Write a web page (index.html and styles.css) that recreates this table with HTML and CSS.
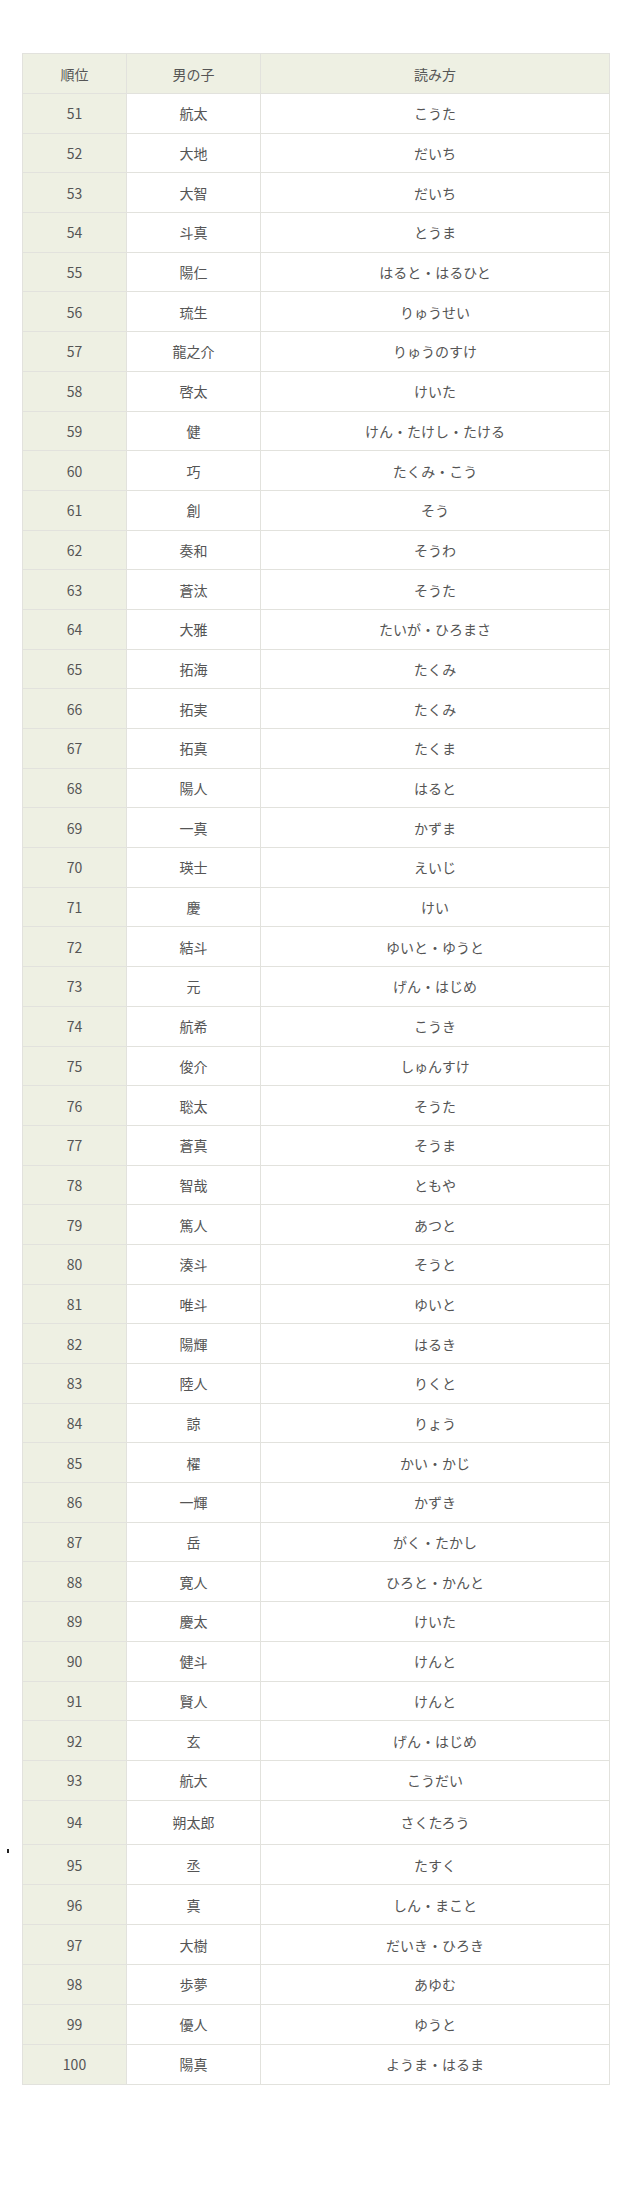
FILE: index.html
```html
<!DOCTYPE html>
<html lang="ja">
<head>
<meta charset="utf-8">
<title>男の子の名前ランキング</title>
<link rel="stylesheet" href="styles.css">
</head>
<body>
<div class="page">
<span class="tick"></span>
<table class="rank">
<thead>
<tr><th class="c-rank">順位</th><th class="c-name">男の子</th><th class="c-read">読み方</th></tr>
</thead>
<tbody>
<tr><td class="c-rank">51</td><td>航太</td><td>こうた</td></tr>
<tr><td class="c-rank">52</td><td>大地</td><td>だいち</td></tr>
<tr><td class="c-rank">53</td><td>大智</td><td>だいち</td></tr>
<tr><td class="c-rank">54</td><td>斗真</td><td>とうま</td></tr>
<tr><td class="c-rank">55</td><td>陽仁</td><td>はると・はるひと</td></tr>
<tr><td class="c-rank">56</td><td>琉生</td><td>りゅうせい</td></tr>
<tr><td class="c-rank">57</td><td>龍之介</td><td>りゅうのすけ</td></tr>
<tr><td class="c-rank">58</td><td>啓太</td><td>けいた</td></tr>
<tr><td class="c-rank">59</td><td>健</td><td>けん・たけし・たける</td></tr>
<tr><td class="c-rank">60</td><td>巧</td><td>たくみ・こう</td></tr>
<tr><td class="c-rank">61</td><td>創</td><td>そう</td></tr>
<tr><td class="c-rank">62</td><td>奏和</td><td>そうわ</td></tr>
<tr><td class="c-rank">63</td><td>蒼汰</td><td>そうた</td></tr>
<tr><td class="c-rank">64</td><td>大雅</td><td>たいが・ひろまさ</td></tr>
<tr><td class="c-rank">65</td><td>拓海</td><td>たくみ</td></tr>
<tr><td class="c-rank">66</td><td>拓実</td><td>たくみ</td></tr>
<tr><td class="c-rank">67</td><td>拓真</td><td>たくま</td></tr>
<tr><td class="c-rank">68</td><td>陽人</td><td>はると</td></tr>
<tr><td class="c-rank">69</td><td>一真</td><td>かずま</td></tr>
<tr><td class="c-rank">70</td><td>瑛士</td><td>えいじ</td></tr>
<tr><td class="c-rank">71</td><td>慶</td><td>けい</td></tr>
<tr><td class="c-rank">72</td><td>結斗</td><td>ゆいと・ゆうと</td></tr>
<tr><td class="c-rank">73</td><td>元</td><td>げん・はじめ</td></tr>
<tr><td class="c-rank">74</td><td>航希</td><td>こうき</td></tr>
<tr><td class="c-rank">75</td><td>俊介</td><td>しゅんすけ</td></tr>
<tr><td class="c-rank">76</td><td>聡太</td><td>そうた</td></tr>
<tr><td class="c-rank">77</td><td>蒼真</td><td>そうま</td></tr>
<tr><td class="c-rank">78</td><td>智哉</td><td>ともや</td></tr>
<tr><td class="c-rank">79</td><td>篤人</td><td>あつと</td></tr>
<tr><td class="c-rank">80</td><td>湊斗</td><td>そうと</td></tr>
<tr><td class="c-rank">81</td><td>唯斗</td><td>ゆいと</td></tr>
<tr><td class="c-rank">82</td><td>陽輝</td><td>はるき</td></tr>
<tr><td class="c-rank">83</td><td>陸人</td><td>りくと</td></tr>
<tr><td class="c-rank">84</td><td>諒</td><td>りょう</td></tr>
<tr><td class="c-rank">85</td><td>櫂</td><td>かい・かじ</td></tr>
<tr><td class="c-rank">86</td><td>一輝</td><td>かずき</td></tr>
<tr><td class="c-rank">87</td><td>岳</td><td>がく・たかし</td></tr>
<tr><td class="c-rank">88</td><td>寛人</td><td>ひろと・かんと</td></tr>
<tr><td class="c-rank">89</td><td>慶太</td><td>けいた</td></tr>
<tr><td class="c-rank">90</td><td>健斗</td><td>けんと</td></tr>
<tr><td class="c-rank">91</td><td>賢人</td><td>けんと</td></tr>
<tr><td class="c-rank">92</td><td>玄</td><td>げん・はじめ</td></tr>
<tr><td class="c-rank">93</td><td>航大</td><td>こうだい</td></tr>
<tr class="tall"><td class="c-rank">94</td><td>朔太郎</td><td>さくたろう</td></tr>
<tr class="lower"><td class="c-rank">95</td><td>丞</td><td>たすく</td></tr>
<tr class="lower"><td class="c-rank">96</td><td>真</td><td>しん・まこと</td></tr>
<tr class="lower"><td class="c-rank">97</td><td>大樹</td><td>だいき・ひろき</td></tr>
<tr class="lower"><td class="c-rank">98</td><td>歩夢</td><td>あゆむ</td></tr>
<tr class="lower"><td class="c-rank">99</td><td>優人</td><td>ゆうと</td></tr>
<tr class="lower"><td class="c-rank">100</td><td>陽真</td><td>ようま・はるま</td></tr>
</tbody>
</table>
</div>
</body>
</html>
```

FILE: styles.css
```css
html, body {
  margin: 0;
  padding: 0;
  background: #ffffff;
}

.page {
  position: relative;
  padding: 53px 30px 120px 22px;
  font-family: "Noto Sans CJK JP", "Noto Sans", sans-serif;
  color: #555555;
}

.tick {
  position: absolute;
  left: 7px;
  top: 1849px;
  width: 2px;
  height: 4px;
  background: #222222;
}

.rank {
  width: 588px;
  border-collapse: collapse;
  table-layout: fixed;
  font-size: 14px;
  line-height: 20px;
}

.rank th,
.rank td {
  border: 1px solid #e2e2dd;
  text-align: center;
  vertical-align: middle;
  padding: 0;
  font-weight: 400;
}

.rank th {
  background: #eef0e3;
  height: 39px;
}

.rank td {
  height: 38.7px;
}

.rank .tall td {
  height: 43.6px;
}

.rank .lower td {
  height: 38.95px;
}

.rank td.c-rank {
  background: #eef0e3;
}

.c-rank { width: 103px; }
.c-name { width: 133px; }
.c-read { width: auto; }
```
